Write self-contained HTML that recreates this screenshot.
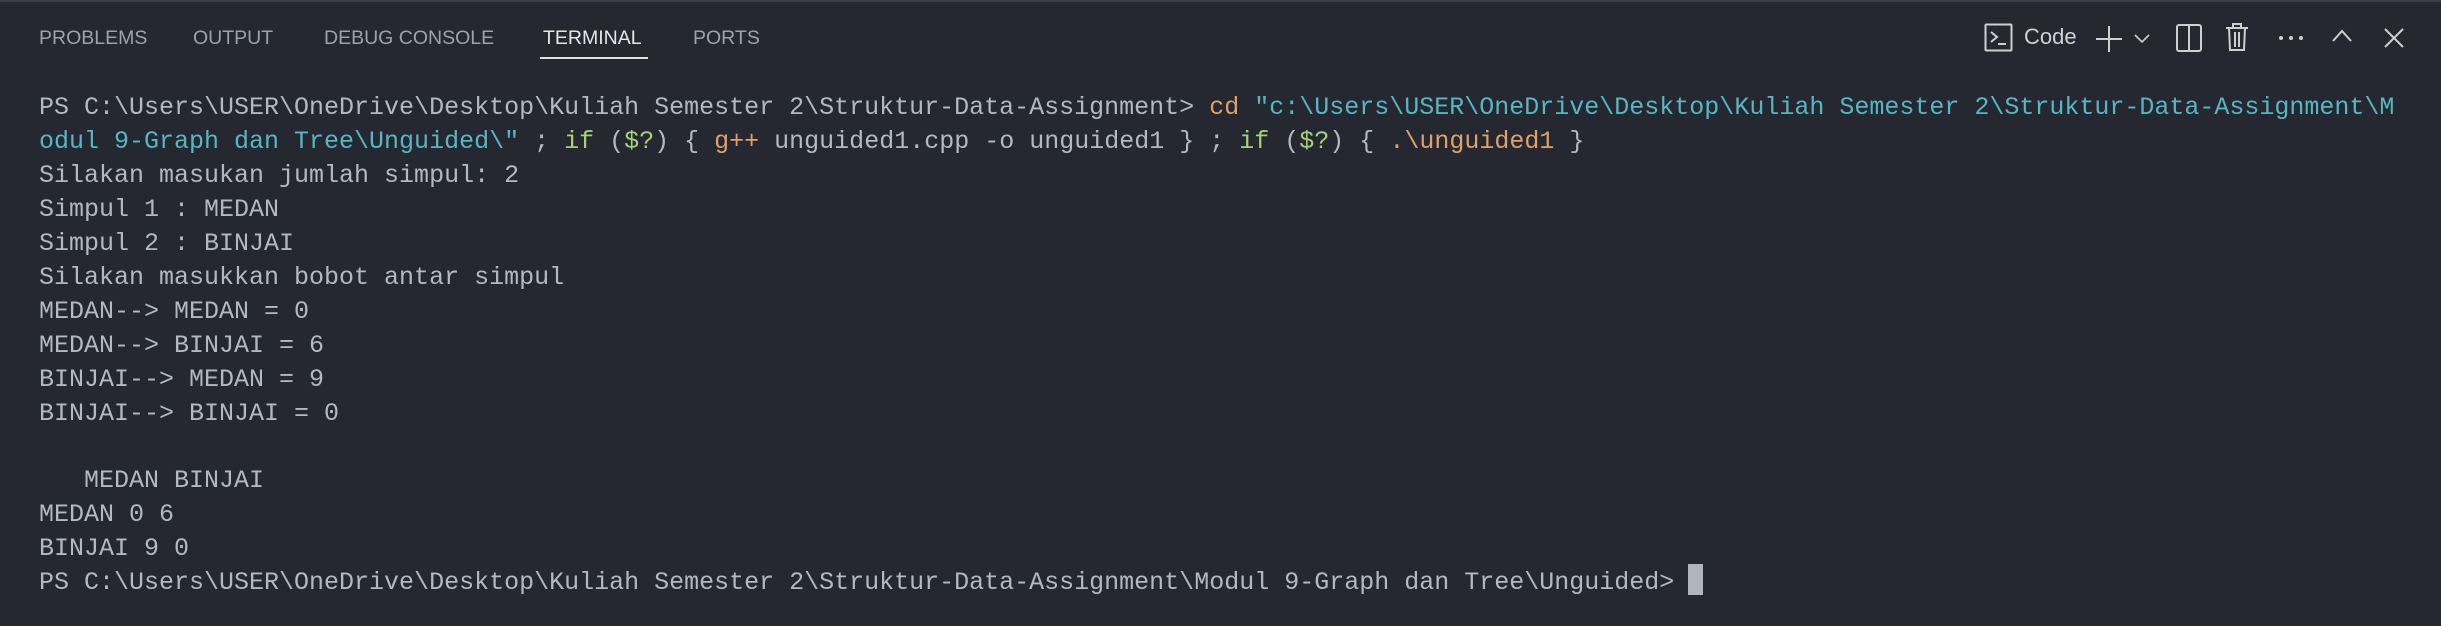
<!DOCTYPE html>
<html><head><meta charset="utf-8"><style>
html,body{margin:0;padding:0;background:#252830;}
body{width:2441px;height:626px;position:relative;overflow:hidden;}
.topline{position:absolute;left:0;top:0;width:2441px;height:2px;background:#3d4048;}
.tab{position:absolute;top:27px;font-family:"Liberation Sans",sans-serif;font-size:19.5px;color:#9da2ab;white-space:nowrap;}
.tab.act{color:#e6e6e6;}
.ul{position:absolute;left:540px;top:57px;width:108px;height:2px;background:#e0e0e0;}
pre{position:absolute;left:39px;top:91px;margin:0;font-family:"Liberation Mono",monospace;font-size:25px;line-height:33.95px;color:#b3b8c1;}
.o{color:#e0a06a}.c{color:#56b6c2}.g{color:#a8d07a}
.cur{position:absolute;left:1688px;top:564px;width:15px;height:31px;background:#b0b4bc;}
svg{position:absolute;}
.code{position:absolute;left:2024px;top:24px;font-family:"Liberation Sans",sans-serif;font-size:22px;color:#d0d0d0;}
</style></head><body>
<div class="topline"></div>
<div class="tab" style="left:39px">PROBLEMS</div>
<div class="tab" style="left:193px">OUTPUT</div>
<div class="tab" style="left:324px">DEBUG CONSOLE</div>
<div class="tab act" style="left:543px">TERMINAL</div>
<div class="tab" style="left:693px">PORTS</div>
<div class="ul"></div>

<svg style="left:1984px;top:23px" width="30" height="30" viewBox="0 0 30 30" fill="none" stroke="#cfcfcf" stroke-width="2"><rect x="1.5" y="1.5" width="26" height="26" rx="1"/><path d="M7 9l6 5-6 5M14 21h8"/></svg>
<div class="code">Code</div>
<svg style="left:2094px;top:25px" width="30" height="28" viewBox="0 0 30 28" stroke="#cfcfcf" stroke-width="2"><path d="M15 1v26M2 14h26"/></svg>
<svg style="left:2133px;top:31px" width="18" height="14" viewBox="0 0 18 14" fill="none" stroke="#cfcfcf" stroke-width="1.6"><path d="M2 4l7 7 7-7"/></svg>
<svg style="left:2175px;top:23px" width="28" height="30" viewBox="0 0 28 30" fill="none" stroke="#cfcfcf" stroke-width="2"><rect x="2" y="2" width="24" height="26" rx="2"/><path d="M14 2v26"/></svg>
<svg style="left:2225px;top:22px" width="24" height="30" viewBox="0 0 24 30" fill="none" stroke="#cfcfcf" stroke-width="2"><path d="M1 6h22M8 6V2h8v4M4 6l1 22h14l1-22M10 10v15M14 10v15"/></svg>
<svg style="left:2278px;top:34px" width="26" height="8" viewBox="0 0 26 8" fill="#cfcfcf"><circle cx="3" cy="4" r="2"/><circle cx="13" cy="4" r="2"/><circle cx="23" cy="4" r="2"/></svg>
<svg style="left:2331px;top:28px" width="22" height="16" viewBox="0 0 22 16" fill="none" stroke="#cfcfcf" stroke-width="2"><path d="M2 13l9-10 9 10"/></svg>
<svg style="left:2382px;top:26px" width="24" height="24" viewBox="0 0 24 24" fill="none" stroke="#cfcfcf" stroke-width="2"><path d="M3 3l18 18M21 3L3 21"/></svg>

<pre>PS C:\Users\USER\OneDrive\Desktop\Kuliah Semester 2\Struktur-Data-Assignment&gt; <span class="o">cd</span> <span class="c">"c:\Users\USER\OneDrive\Desktop\Kuliah Semester 2\Struktur-Data-Assignment\M</span>
<span class="c">odul 9-Graph dan Tree\Unguided\"</span> ; <span class="g">if</span> (<span class="g">$?</span>) { <span class="o">g++</span> unguided1.cpp -o unguided1 } ; <span class="g">if</span> (<span class="g">$?</span>) { <span class="o">.\unguided1</span> }
Silakan masukan jumlah simpul: 2
Simpul 1 : MEDAN
Simpul 2 : BINJAI
Silakan masukkan bobot antar simpul
MEDAN--&gt; MEDAN = 0
MEDAN--&gt; BINJAI = 6
BINJAI--&gt; MEDAN = 9
BINJAI--&gt; BINJAI = 0

   MEDAN BINJAI
MEDAN 0 6
BINJAI 9 0
PS C:\Users\USER\OneDrive\Desktop\Kuliah Semester 2\Struktur-Data-Assignment\Modul 9-Graph dan Tree\Unguided&gt; </pre>
<div class="cur"></div>
</body></html>
